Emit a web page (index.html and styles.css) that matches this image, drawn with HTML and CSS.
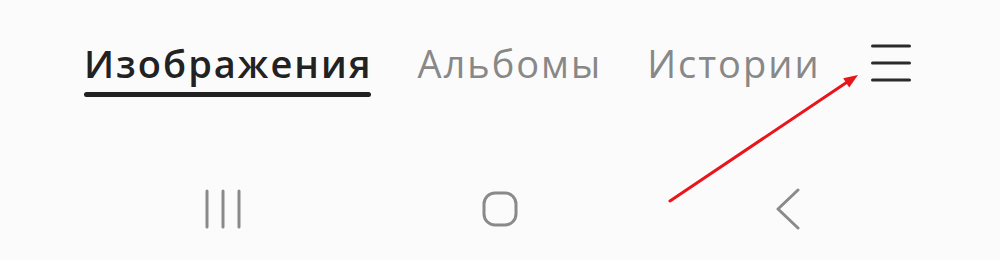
FILE: index.html
```html
<!DOCTYPE html>
<html lang="ru">
<head>
<meta charset="utf-8">
<title>Галерея</title>
<link rel="stylesheet" href="styles.css">
</head>
<body>
<div class="screen">
  <div class="tabs">
    <div class="tab active">Изображения</div>
    <div class="tab">Альбомы</div>
    <div class="tab">Истории</div>
    <div class="menu">
      <svg width="40" height="40" viewBox="0 0 40 40">
        <g stroke="#2a2a2a" stroke-width="3.2" stroke-linecap="round">
          <line x1="1.6" y1="3" x2="38.4" y2="3"/>
          <line x1="1.6" y1="20" x2="38.4" y2="20"/>
          <line x1="1.6" y1="37" x2="38.4" y2="37"/>
        </g>
      </svg>
    </div>
  </div>
  <nav class="navbar">
    <div class="nav-btn recents">
      <svg width="36" height="40" viewBox="0 0 36 40">
        <g stroke="#8a8a8a" stroke-width="3" stroke-linecap="round">
          <line x1="2" y1="2" x2="2" y2="38"/>
          <line x1="18" y1="2" x2="18" y2="38"/>
          <line x1="34" y1="2" x2="34" y2="38"/>
        </g>
      </svg>
    </div>
    <div class="nav-btn home">
      <svg width="36" height="36" viewBox="0 0 36 36">
        <rect x="2" y="2" width="32" height="32" rx="11" ry="11" fill="none" stroke="#8a8a8a" stroke-width="3"/>
      </svg>
    </div>
    <div class="nav-btn back">
      <svg width="26" height="42" viewBox="0 0 26 42">
        <polyline points="23,2 3,21 23,40" fill="none" stroke="#8a8a8a" stroke-width="3" stroke-linecap="round" stroke-linejoin="round"/>
      </svg>
    </div>
  </nav>
  <svg class="arrow" width="1000" height="260" viewBox="0 0 1000 260">
    <line x1="670" y1="201" x2="848" y2="81.5" stroke="#e8151b" stroke-width="3" stroke-linecap="round"/>
    <polygon points="858,75 849.2,87.5 843.2,78.3" fill="#e8151b"/>
  </svg>
</div>
</body>
</html>
```
FILE: styles.css
```css
html, body {
  margin: 0;
  padding: 0;
  background: #fbfbfb;
}

.screen {
  position: relative;
  width: 1000px;
  height: 260px;
  font-family: "Open Sans", Roboto, sans-serif;
  overflow: hidden;
}

.tabs {
  display: flex;
  align-items: flex-start;
  padding: 44px 0 0 84px;
  height: 122px;
  box-sizing: border-box;
}

.tab {
  font-size: 38px;
  line-height: 38px;
  color: #888888;
  margin-right: 45px;
  letter-spacing: 2px;
}

.tab.active {
  color: #222222;
  font-weight: 600;
}

.tab.active::after {
  content: "";
  display: block;
  height: 5px;
  margin-top: 10px;
  margin-right: 1px;
  background: #222222;
  border-radius: 3px;
}

.menu {
  margin-top: -1px;
  margin-left: 5px;
  line-height: 0;
}

.navbar {
  display: flex;
  align-items: center;
  height: 138px;
  padding: 36px 0 0 205px;
  box-sizing: border-box;
}

.nav-btn {
  line-height: 0;
}

.home {
  margin-left: 241px;
}

.back {
  margin-left: 257px;
}

.arrow {
  position: absolute;
  left: 0;
  top: 0;
  pointer-events: none;
}
```
